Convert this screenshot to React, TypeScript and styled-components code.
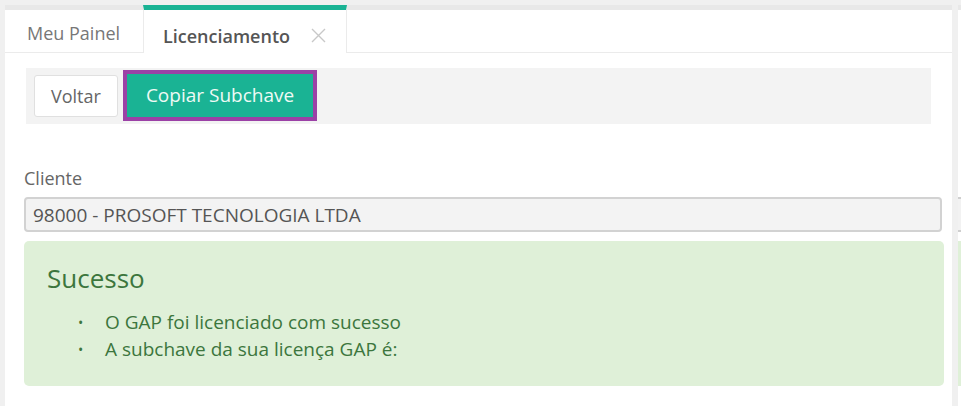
import React from 'react';
import styled, { createGlobalStyle } from 'styled-components';

const GlobalStyle = createGlobalStyle`
  html, body {
    margin: 0;
    padding: 0;
    background: #f0f0f0;
    font-family: "Open Sans", "Liberation Sans", sans-serif;
  }
`;

const Page = styled.div`
  display: flex;
  gap: 6px;
  padding: 5px 0 0 5px;
  height: 406px;
  box-sizing: border-box;
  overflow: hidden;
`;

const Panel = styled.div`
  flex: none;
  width: 947px;
  background: #fff;
  display: flex;
  flex-direction: column;
`;

const SidePanel = styled.div`
  flex: 1;
  background: #fff;
  display: flex;
  flex-direction: column;
  border-top: 5px solid #e8e8e8;
`;

const SideInput = styled.div`
  margin-top: 187px;
  height: 31px;
  background: #f2f2f2;
  border-top: 2px solid #cfcfcf;
  border-bottom: 2px solid #cfcfcf;
`;

const SideAlert = styled.div`
  margin-top: 9px;
  height: 145px;
  background: #dff0d8;
`;

const TabBar = styled.div`
  display: flex;
  height: 42px;
  border-top: 5px solid #e8e8e8;
  border-bottom: 1px solid #ebebeb;
`;

const Tab = styled.div<{ $active?: boolean }>`
  display: flex;
  align-items: center;
  gap: 21px;
  box-sizing: border-box;
  font-size: 18px;
  padding-top: 3px;
  color: ${p => (p.$active ? '#555' : '#777')};
  font-weight: ${p => (p.$active ? 600 : 400)};
  background: #fff;
  ${p =>
    p.$active
      ? `
    margin-top: -5px;
    height: 48px;
    padding: 8px 20px 0 19px;
    border-top: 5px solid #1ab394;
    border-left: 1px solid #ebebeb;
    border-right: 1px solid #ebebeb;
  `
      : `
    padding-left: 22px;
    width: 138px;
  `}
`;

const CloseIcon = styled.span`
  display: inline-flex;
  color: #c8c8c8;
`;

const Content = styled.div`
  padding: 15px 21px 0;
`;

const Toolbar = styled.div`
  display: flex;
  align-items: center;
  gap: 9px;
  height: 56px;
  padding: 0 8px;
  background: #f3f3f3;
`;

const Button = styled.button<{ $primary?: boolean }>`
  font-family: inherit;
  font-size: ${p => (p.$primary ? '19px' : '18px')};
  height: ${p => (p.$primary ? '43px' : '42px')};
  padding: 0 ${p => (p.$primary ? '18px' : '16px')};
  border-radius: ${p => (p.$primary ? '0' : '3px')};
  border: 1px solid ${p => (p.$primary ? '#1ab394' : '#e0e0e0')};
  background: ${p => (p.$primary ? '#1ab394' : '#fff')};
  color: ${p => (p.$primary ? '#eefaf5' : '#666')};
  outline: ${p => (p.$primary ? '4px solid #9b41a6' : 'none')};
  margin-top: ${p => (p.$primary ? '-2px' : '0')};
`;

const Form = styled.div`
  padding: 42px 8px 0 19px;
  display: flex;
  flex-direction: column;
`;

const Label = styled.label`
  font-size: 18px;
  line-height: 24px;
  color: #666;
  margin-bottom: 7px;
`;

const Input = styled.div`
  height: 35px;
  box-sizing: border-box;
  padding: 0 7px;
  display: flex;
  align-items: center;
  background: #f3f3f3;
  border: 2px solid #d2d2d2;
  border-radius: 4px;
  font-size: 19px;
  color: #555;
  margin-right: 2px;
`;

const Alert = styled.div`
  margin-top: 9px;
  height: 145px;
  box-sizing: border-box;
  background: #dff0d8;
  border-radius: 5px;
  padding: 19px 23px;
  color: #3c763d;
`;

const AlertTitle = styled.h4`
  margin: 0 0 13px;
  font-size: 26px;
  line-height: 36px;
  font-weight: 400;
`;

const AlertList = styled.ul`
  margin: 0;
  padding-left: 58px;
  list-style: none;
`;

const AlertItem = styled.li`
  font-size: 19px;
  line-height: 27px;
  position: relative;
  &::before {
    content: '•';
    position: absolute;
    left: -27px;
    font-size: 14px;
  }
`;

export default function App() {
  return (
    <>
      <GlobalStyle />
      <Page>
        <Panel>
          <TabBar>
            <Tab>Meu Painel</Tab>
            <Tab $active>
              Licenciamento
              <CloseIcon>
                <svg width="15" height="15" viewBox="0 0 15 15">
                  <path d="M1 1L14 14M14 1L1 14" stroke="currentColor" strokeWidth="1.4" />
                </svg>
              </CloseIcon>
            </Tab>
          </TabBar>
          <Content>
            <Toolbar>
              <Button>Voltar</Button>
              <Button $primary>Copiar Subchave</Button>
            </Toolbar>
          </Content>
          <Form>
            <Label>Cliente</Label>
            <Input>98000 - PROSOFT TECNOLOGIA LTDA</Input>
            <Alert>
              <AlertTitle>Sucesso</AlertTitle>
              <AlertList>
                <AlertItem>O GAP foi licenciado com sucesso</AlertItem>
                <AlertItem>A subchave da sua licença GAP é:</AlertItem>
              </AlertList>
            </Alert>
          </Form>
        </Panel>
        <SidePanel>
          <SideInput />
          <SideAlert />
        </SidePanel>
      </Page>
    </>
  );
}
